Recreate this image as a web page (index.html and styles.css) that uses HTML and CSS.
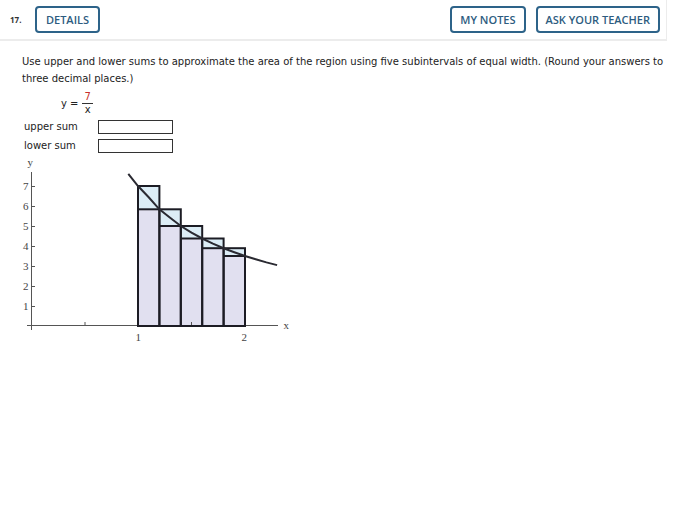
FILE: index.html
```html
<!DOCTYPE html>
<html>
<head>
<meta charset="utf-8">
<link rel="stylesheet" href="styles.css">
</head>
<body>
<div class="header">
  <span class="qnum">17.</span>
  <button class="btn details">DETAILS</button>
  <span class="spacer"></span>
  <button class="btn">MY NOTES</button>
  <button class="btn">ASK YOUR TEACHER</button>
</div>
<div class="content">
  <p class="prompt">Use upper and lower sums to approximate the area of the region using five subintervals of equal width. (Round your answers to three decimal places.)</p>
  <div class="formula">
    <span class="lhs">y =</span>
    <span class="frac"><span class="num">7</span><span class="den">x</span></span>
  </div>
  <div class="row"><span class="lbl">upper sum</span><span class="box"></span></div>
  <div class="row"><span class="lbl">lower sum</span><span class="box"></span></div>
  <svg class="graph" width="290" height="190" viewBox="14 155 290 190">
    <g fill="#e1e0f0" stroke="none">
      <rect x="138" y="209.3" width="21.4" height="116.7"/>
      <rect x="159.4" y="226" width="21.4" height="100"/>
      <rect x="180.8" y="238.5" width="21.4" height="87.5"/>
      <rect x="202.2" y="248.2" width="21.4" height="77.8"/>
      <rect x="223.6" y="256" width="21.4" height="70"/>
    </g>
    <g fill="#dcedf6" stroke="none">
      <rect x="138" y="186" width="21.4" height="23.3"/>
      <rect x="159.4" y="209.3" width="21.4" height="16.7"/>
      <rect x="180.8" y="226" width="21.4" height="12.5"/>
      <rect x="202.2" y="238.5" width="21.4" height="9.7"/>
      <rect x="223.6" y="248.2" width="21.4" height="7.8"/>
    </g>
    <g stroke="#555" stroke-width="1" fill="none">
      <line x1="27" y1="325.5" x2="278" y2="325.5"/>
      <line x1="31.5" y1="172" x2="31.5" y2="330"/>
      <line x1="31.5" y1="186.5" x2="35" y2="186.5"/>
      <line x1="31.5" y1="206.5" x2="35" y2="206.5"/>
      <line x1="31.5" y1="226.5" x2="35" y2="226.5"/>
      <line x1="31.5" y1="246.5" x2="35" y2="246.5"/>
      <line x1="31.5" y1="266.5" x2="35" y2="266.5"/>
      <line x1="31.5" y1="286.5" x2="35" y2="286.5"/>
      <line x1="31.5" y1="306.5" x2="35" y2="306.5"/>
      <line x1="85" y1="322" x2="85" y2="325.5"/>
      <line x1="191.5" y1="322" x2="191.5" y2="325.5"/>
    </g>
    <g stroke="#1c1c24" stroke-width="2" fill="none">
      <rect x="138" y="186" width="21.4" height="140"/>
      <rect x="159.4" y="209.3" width="21.4" height="116.7"/>
      <rect x="180.8" y="226" width="21.4" height="100"/>
      <rect x="202.2" y="238.5" width="21.4" height="87.5"/>
      <rect x="223.6" y="248.2" width="21.4" height="77.8"/>
      <line x1="138" y1="209.3" x2="159.4" y2="209.3"/>
      <line x1="159.4" y1="226" x2="180.8" y2="226"/>
      <line x1="180.8" y1="238.5" x2="202.2" y2="238.5"/>
      <line x1="202.2" y1="248.2" x2="223.6" y2="248.2"/>
      <line x1="223.6" y1="256" x2="245" y2="256"/>
    </g>
    <path class="curve" d="M128.3 173.8 L138 186 L148.7 197.3 L159.4 209.3 L170.1 217.8 L180.8 226 L191.5 232.6 L202.2 238.5 L212.9 243.6 L223.6 248.2 L234.3 252.2 L245 256 L255.7 259.3 L266.4 262.4 L277.1 265.1" fill="none" stroke="#2a2a32" stroke-width="2"/>
    <g class="ticklbl" font-family="Liberation Serif, serif" font-size="11" fill="#444">
      <text x="27.5" y="166">y</text>
      <text x="23" y="190">7</text>
      <text x="23" y="210">6</text>
      <text x="23" y="230">5</text>
      <text x="23" y="250">4</text>
      <text x="23" y="270">3</text>
      <text x="23" y="290">2</text>
      <text x="23" y="310">1</text>
      <text x="135.5" y="341">1</text>
      <text x="241.5" y="341">2</text>
      <text x="283.5" y="329">x</text>
    </g>
  </svg>
</div>
</body>
</html>
```

FILE: styles.css
```css
html, body {
  margin: 0;
  padding: 0;
  background: #fff;
}
body {
  width: 700px;
  height: 530px;
  overflow: hidden;
}
.header {
  width: 667px;
  height: 41px;
  box-sizing: border-box;
  display: flex;
  align-items: center;
  padding: 0 6px 0 10px;
  border-right: 1px solid #ececec;
  border-bottom: 2px solid #ececec;
  font-family: "Open Sans", sans-serif;
}
.qnum {
  font-size: 8px;
  font-weight: 700;
  color: #333;
  width: 25px;
}
.spacer { flex: 1; }
.btn {
  font-family: "Open Sans", sans-serif;
  font-size: 11px;
  font-weight: 600;
  color: #2d5c80;
  background: #fff;
  border: 2px solid #2d6389;
  border-radius: 4px;
  height: 27px;
  padding: 0 8px;
  margin-left: 10px;
  letter-spacing: 0;
}
.btn.details { margin-left: 0; width: 65px; padding: 0; }
.content {
  padding: 12px 0 0 22px;
  font-family: "DejaVu Sans", Verdana, sans-serif;
  font-size: 10px;
  color: #222;
}
.prompt {
  margin: 0;
  line-height: 17px;
  width: 645px;
}
.formula {
  display: flex;
  align-items: center;
  margin: 3px 0 0 39px;
  height: 27px;
}
.lhs { margin-right: 4px; }
.frac {
  display: inline-flex;
  flex-direction: column;
  align-items: center;
  line-height: 12px;
}
.num {
  color: #c8312b;
  border-bottom: 1px solid #333;
  padding: 0 2px;
}
.row {
  display: flex;
  align-items: center;
  height: 19px;
  margin-left: 2px;
}
.lbl { width: 74px; }
.box {
  width: 73px;
  height: 12px;
  border: 1px solid #333;
}
.graph {
  display: block;
  margin: 0 0 0 -8px;
}
```
